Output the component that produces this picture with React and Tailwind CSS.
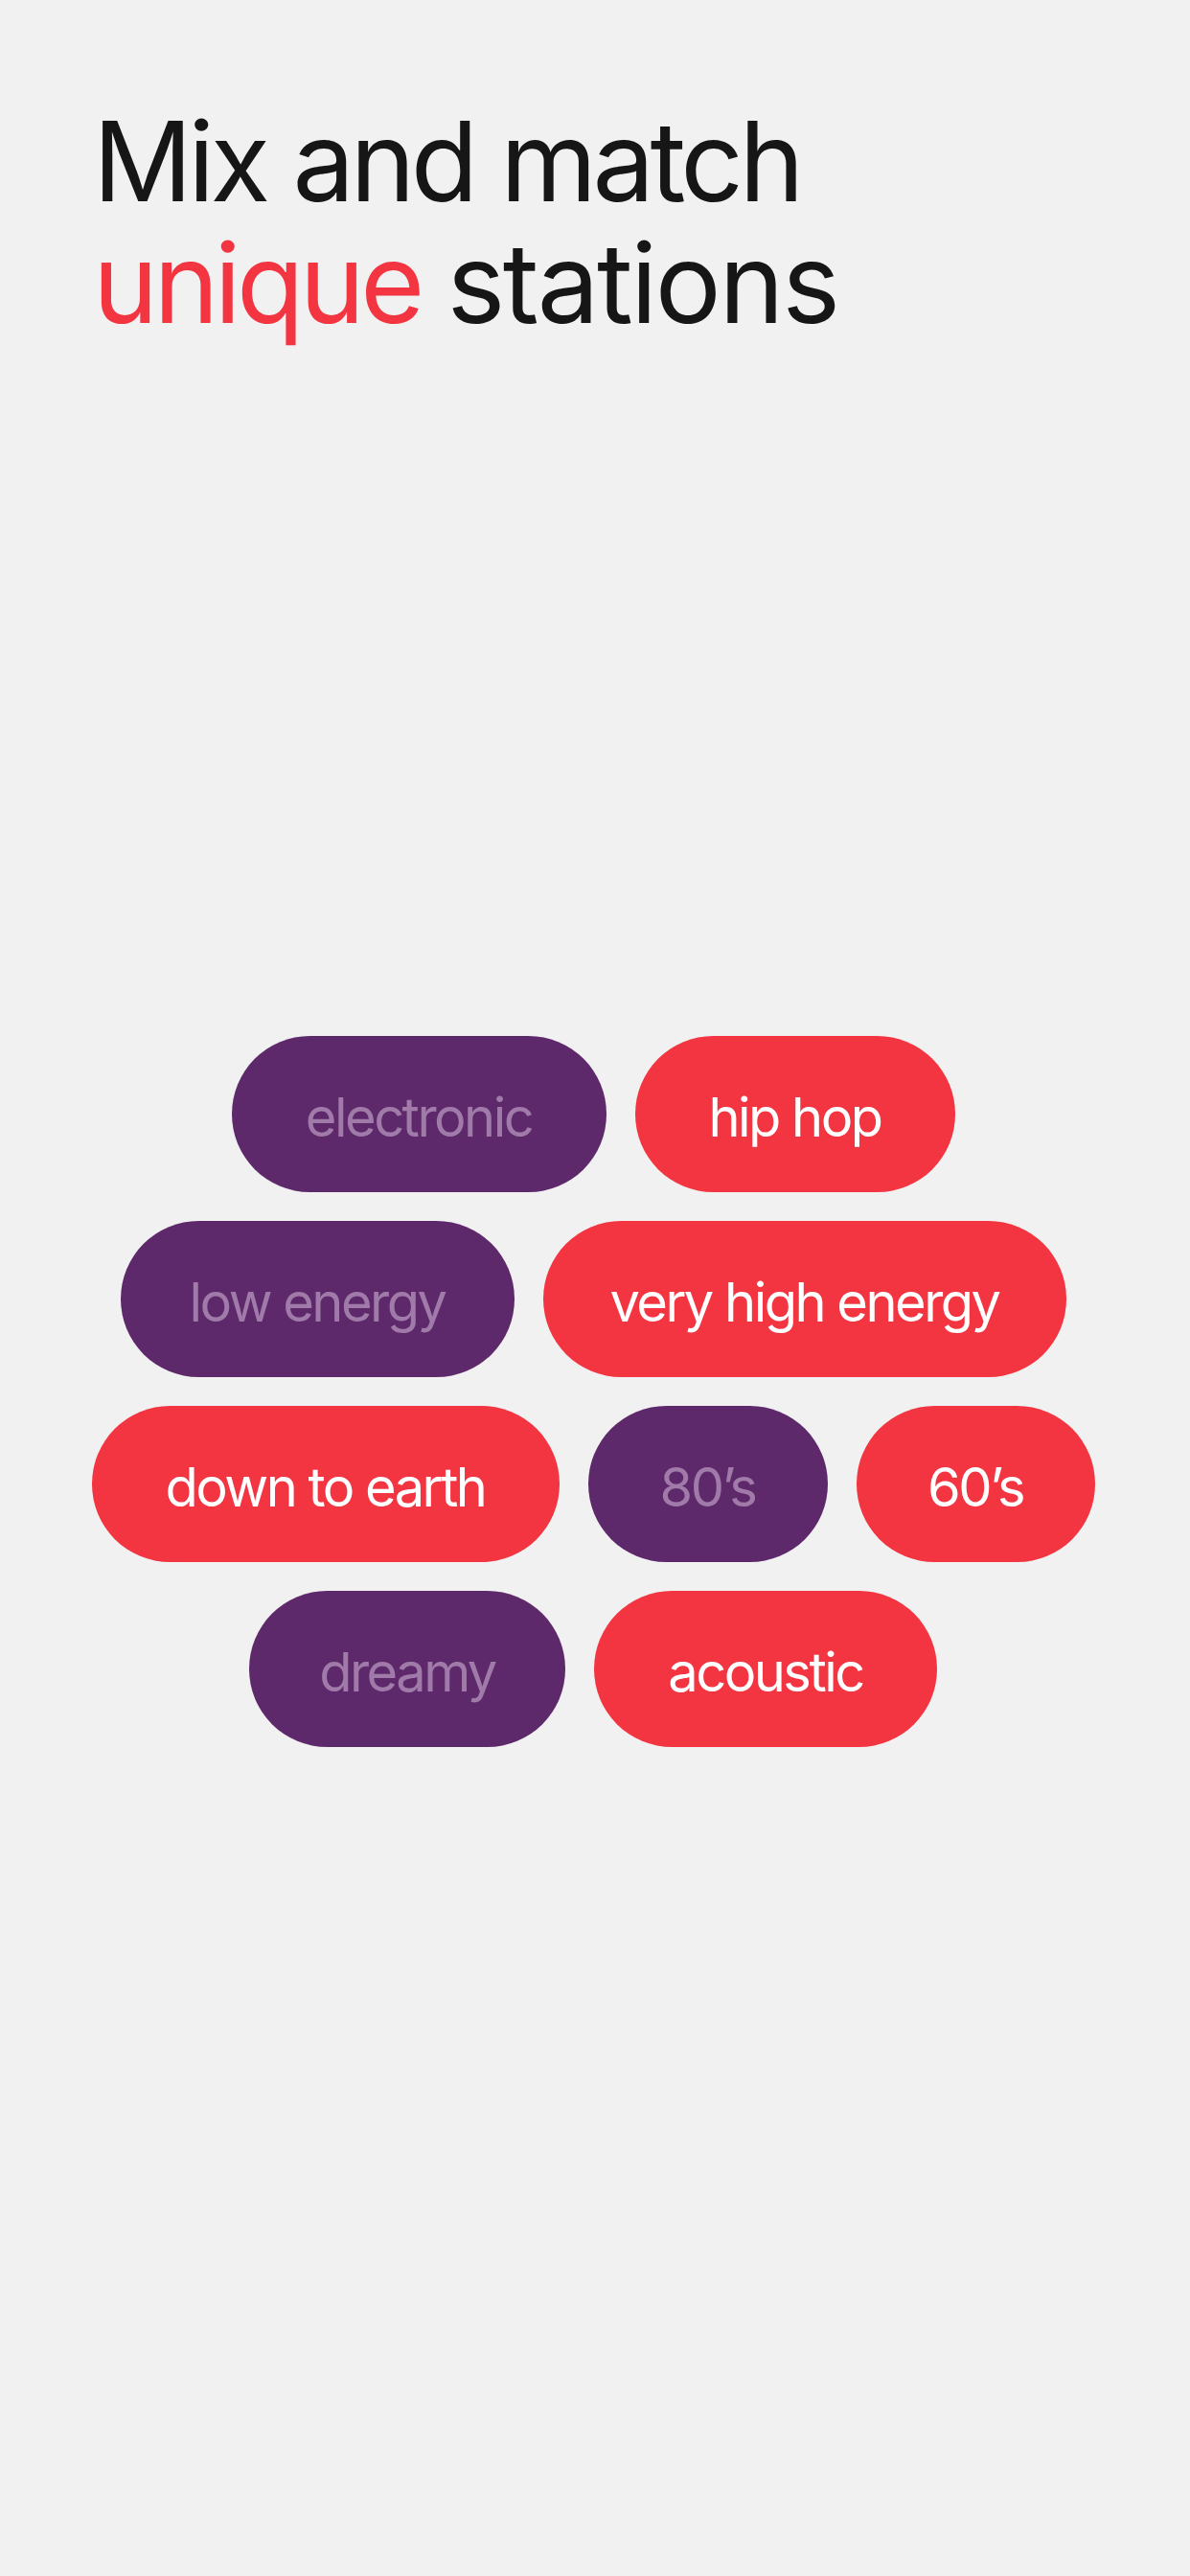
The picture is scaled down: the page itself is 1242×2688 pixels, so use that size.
import React from 'react';

const rows = [
  [
    { label: 'electronic', tone: 'purple', w: 'w-[391px]' },
    { label: 'hip hop', tone: 'red', w: 'w-[334px]' },
  ],
  [
    { label: 'low energy', tone: 'purple', w: 'w-[411px]' },
    { label: 'very high energy', tone: 'red', w: 'w-[546px]' },
  ],
  [
    { label: 'down to earth', tone: 'red', w: 'w-[488px]' },
    { label: '80’s', tone: 'purple', w: 'w-[250px]' },
    { label: '60’s', tone: 'red', w: 'w-[249px]' },
  ],
  [
    { label: 'dreamy', tone: 'purple', w: 'w-[330px]' },
    { label: 'acoustic', tone: 'red', w: 'w-[358px]' },
  ],
];

const Pill = ({ label, tone, w }) => (
  <div
    className={`${w} h-[163px] rounded-full flex items-center justify-center pt-[6px] text-[56px] tracking-[-0.045em] ${
      tone === 'red' ? 'bg-[#f33441] text-white' : 'bg-[#5e296b] text-[#a07aa9]'
    }`}
  >
    {label}
  </div>
);

export default function App() {
  return (
    <div className="min-h-[2688px] w-full bg-[#f1f1f1] font-['Inter',sans-serif]">
      <h1 className="pt-[105px] pl-[97px] text-[115px] leading-[127px] tracking-[-0.04em] text-[#161616] font-normal">
        Mix and match
        <br />
        <span className="text-[#f33441]">unique</span>{' '}
        <span className="tracking-[-0.02em]">stations</span>
      </h1>
      <div className="mt-[722px] pr-[4px] flex flex-col items-center gap-[30px]">
        {rows.map((row, i) => (
          <div key={i} className="flex justify-center gap-[30px]">
            {row.map((p) => (
              <Pill key={p.label} {...p} />
            ))}
          </div>
        ))}
      </div>
    </div>
  );
}
